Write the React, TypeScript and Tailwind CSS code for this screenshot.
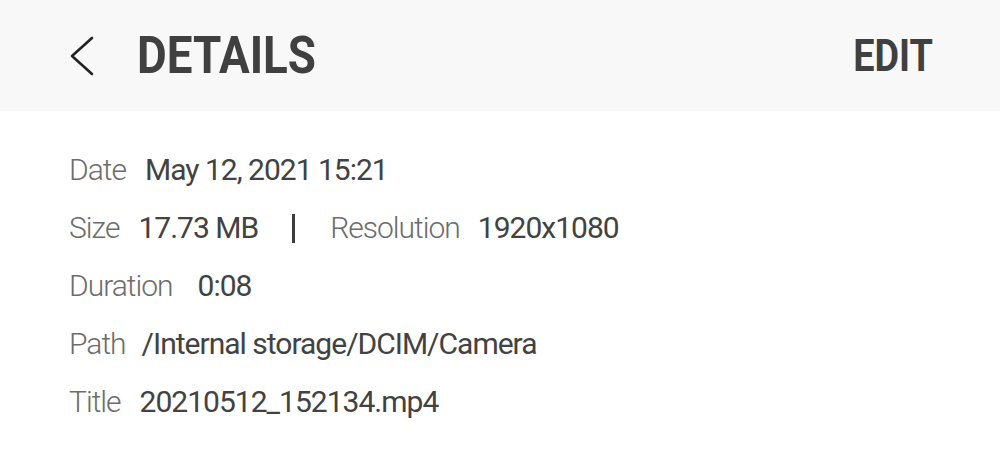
const rows = [
  { label: 'Date', value: 'May 12, 2021 15:21' },
  { label: 'Size', value: '17.73 MB', extra: { label: 'Resolution', value: '1920x1080' } },
  { label: 'Duration', value: '0:08', wide: true },
  { label: 'Path', value: '/Internal storage/DCIM/Camera' },
  { label: 'Title', value: '20210512_152134.mp4' },
];

function Label({ children }: { children: string }) {
  return <span className="font-light text-[#6c6c6c]">{children}</span>;
}

function Value({ children }: { children: string }) {
  return <span className="font-normal text-[#424242]">{children}</span>;
}

export default function App() {
  return (
    <div className="w-[1000px] h-[463px] bg-white font-['Roboto',sans-serif] overflow-hidden">
      {/* Top bar */}
      <header className="h-[111px] bg-[#f8f8f8] flex items-center pl-[69px] pr-[67px]">
        <svg width="26" height="40" viewBox="0 0 26 40" className="shrink-0">
          <path d="M23 2 L3 20 L23 38" fill="none" stroke="#222" strokeWidth="2.6" strokeLinecap="round" strokeLinejoin="round" />
        </svg>
        <h1 className="ml-[42px] text-[52px] leading-none font-bold text-[#404040] inline-block scale-x-[0.88] origin-left">
          DETAILS
        </h1>
        <button className="ml-auto text-[45px] leading-none font-bold text-[#404040] inline-block scale-x-[0.84] origin-right">
          EDIT
        </button>
      </header>

      {/* Detail rows */}
      <div className="pt-[30px] pl-[69px] flex flex-col text-[30px] leading-[58px] tracking-[-0.033em]">
        {rows.map((r) => (
          <div key={r.label} className="flex items-center whitespace-nowrap">
            <Label>{r.label}</Label>
            <span className={r.wide ? 'ml-[25px]' : r.label === 'Path' ? 'ml-[16px]' : 'ml-[19px]'}>
              <Value>{r.value}</Value>
            </span>
            {r.extra && (
              <>
                <span className="ml-[34px] mr-[35px] w-[3px] h-[29px] bg-[#3c3c3c]" />
                <Label>{r.extra.label}</Label>
                <span className="ml-[18px]">
                  <Value>{r.extra.value}</Value>
                </span>
              </>
            )}
          </div>
        ))}
      </div>
    </div>
  );
}
